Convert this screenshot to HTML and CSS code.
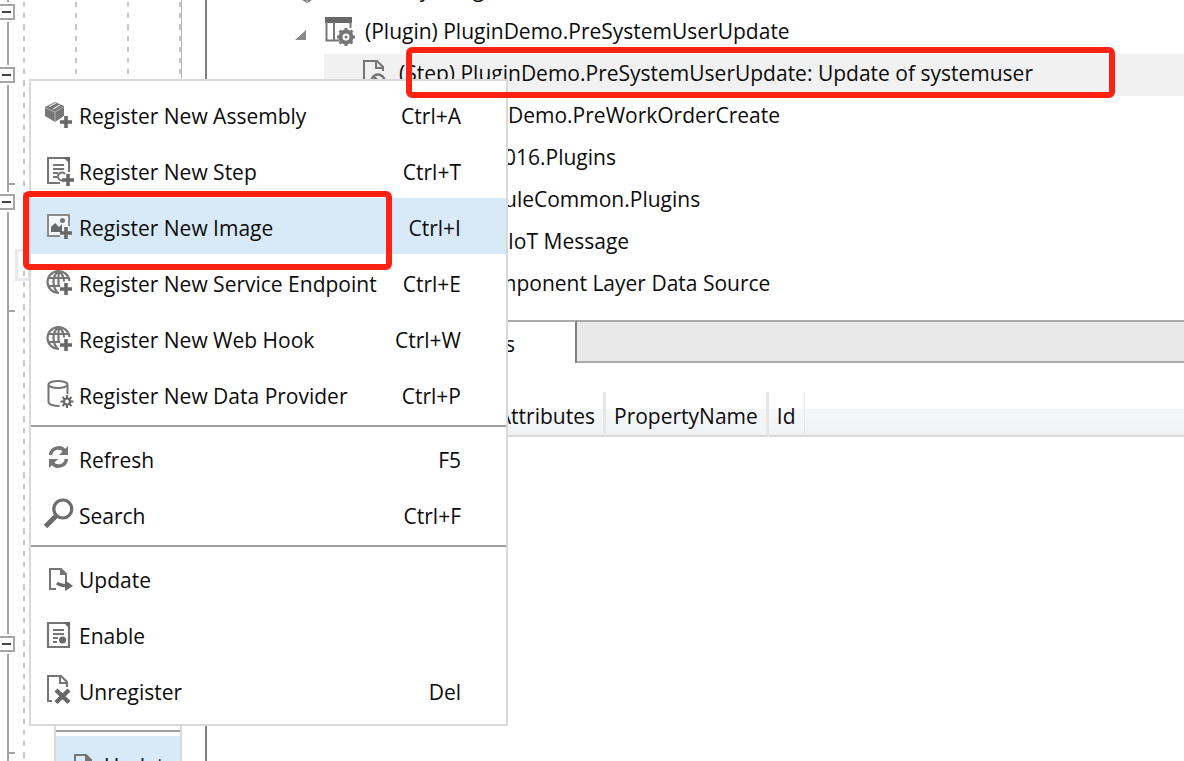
FILE: index.html
```html
<!DOCTYPE html>
<html lang="en">
<head>
<meta charset="utf-8">
<title>Plugin Registration</title>
<link rel="stylesheet" href="styles.css">
</head>
<body>
<svg class="defs" aria-hidden="true">
  <symbol id="globe" viewBox="0 0 30 30">
    <g fill="none" stroke="#757575" stroke-width="2.200">
      <path d="M25.500 12a11 11 0 1 0-10.500 12M14 2.500c-6 5-6 16 0 21.500M15 2.500c4 3 5 6 5 10M4 9h21M4 17h12M14.500 2v15" />
    </g>
    <path d="M22 14v12M16 20h12" stroke="#686868" stroke-width="3.600"/>
  </symbol>
  <symbol id="export" viewBox="0 0 30 30">
    <path d="M12 24H6V4h11l5 5v7" fill="none" stroke="#757575" stroke-width="2"/>
    <path d="M16 3l7 7h-7z" fill="#757575"/>
    <path d="M13 18c3 2.500 5 2.500 9 2.500" fill="none" stroke="#686868" stroke-width="3"/>
    <path d="M21 15l8 6-8 5z" fill="#686868"/>
  </symbol>
</svg>

<main class="app">
  <div class="folds">
    <span class="line top"></span>
    <button class="fold" aria-label="Collapse"></button>
    <span class="line short"></span>
    <button class="fold" aria-label="Collapse"></button>
    <span class="line mid tick"></span><span class="line stub"></span>
    <button class="fold" aria-label="Collapse"></button>
    <span class="line mid tick"></span><span class="line long"></span>
    <button class="fold" aria-label="Collapse"></button>
    <span class="line mid tick"></span><span class="line rest"></span>
  </div>
  <div class="code"><i class="guide"></i><i class="guide"></i><i class="guide"></i><i class="guide last"></i></div>

  <section class="panel">
    <ul class="tree">
      <li class="row assembly">
        <svg class="icon" viewBox="0 0 30 30"><path d="M8 14l8-4 8 4v10l-8 5-8-5z" fill="#777"/><path d="M9 15l7 4 7-4M16 19v9" stroke="#ddd" fill="none"/></svg>
        <span>(Assembly) PluginDemo</span>
      </li>
      <li class="row plugin">
        <svg class="arrow" viewBox="0 0 12 12"><path d="M11 1v10H0z" fill="#8a8a8a"/></svg>
        <svg class="icon" viewBox="0 0 30 30">
          <path d="M0 1h27v6H0z" fill="#686868"/>
          <path d="M1.500 6v18.500H9V6M14 24.500H9M25.500 6v6" fill="none" stroke="#777" stroke-width="2"/>
          <circle cx="21" cy="21" r="5.500" fill="#fff" stroke="#757575" stroke-width="4"/>
          <path d="M21 12v3M21 27v3M12 21h3M27 21h3M14.600 14.600l2.200 2.200M25.200 25.200l2.200 2.200M14.600 27.400l2.200-2.200M25.200 16.800l2.200-2.200" stroke="#757575" stroke-width="3"/>
          <circle cx="21" cy="21" r="1.500" fill="#757575"/>
        </svg>
        <span>(Plugin) PluginDemo.PreSystemUserUpdate</span>
      </li>
      <li class="row step">
        <svg class="icon" viewBox="0 0 30 30">
          <path d="M5 27V3h13l6 6v4M17 3v7h7" fill="none" stroke="#757575" stroke-width="2"/>
          <circle cx="19" cy="23" r="6.500" fill="none" stroke="#757575" stroke-width="2.500"/>
          <path d="M15 19l8 8" stroke="#757575" stroke-width="2.500"/>
        </svg>
        <span>(Step) PluginDemo.PreSystemUserUpdate: Update of systemuser</span>
      </li>
      <li class="row covered">Demo.PreWorkOrderCreate</li>
      <li class="row covered cut">016.Plugins</li>
      <li class="row covered cut">uleCommon.Plugins</li>
      <li class="row covered">IoT Message</li>
      <li class="row covered wide">mponent Layer Data Source</li>
    </ul>
    <div class="tabs" role="tablist"><button class="tab" role="tab" aria-selected="true">s</button><span class="strip"></span></div>
    <table class="grid">
      <thead><tr><th class="attributes">Attributes</th><th class="property">PropertyName</th><th class="id">Id</th><th class="fill"></th></tr></thead>
    </table>
  </section>
</main>

<span class="token"></span>

<div class="menu back">
  <hr>
  <button class="item active"><svg class="icon"><use href="#export"/></svg><span>Update</span></button>
</div>

<div class="menu front" role="menu">
  <button class="item" role="menuitem">
    <svg class="icon" viewBox="0 0 30 30">
      <path d="M1 6l10-5 9 4v10l-9 6-10-6z" fill="#777"/>
      <path d="M1.500 7l9.500 4 8.500-5M11 11v9.500" fill="none" stroke="#b5b5b5" stroke-width="1"/>
      <path d="M5 5.500l7-3.500M9 8l7-4" stroke="#e0e0e0" stroke-width="1.300"/>
      <path d="M22 15v12M16 21h12" stroke="#fff" stroke-width="5.500"/><path d="M22 15v12M16 21h12" stroke="#686868" stroke-width="3.600"/>
    </svg><span>Register New Assembly</span><kbd>Ctrl+A</kbd></button>
  <button class="item" role="menuitem">
    <svg class="icon" viewBox="0 0 30 30">
      <path d="M16 26H4V1h21v14" fill="none" stroke="#757575" stroke-width="2"/><path d="M19 0h7v7z" fill="#686868"/>
      <path d="M9 8h11M9 12h11M9 16h5M9 20h4" stroke="#757575" stroke-width="1.800"/>
      <path d="M21 17a4 4 0 1 0-1 6" fill="none" stroke="#757575" stroke-width="2"/>
      <path d="M24 17v12M18 23h12" stroke="#686868" stroke-width="3.600"/>
    </svg><span>Register New Step</span><kbd>Ctrl+T</kbd></button>
  <button class="item active" role="menuitem">
    <svg class="icon" viewBox="0 0 30 30">
      <path d="M4 2h21v21H4z" fill="#f3f7fa"/>
      <path d="M16 23H4V2h21v11" fill="none" stroke="#8a8a8a" stroke-width="2"/>
      <path d="M7 19v-5l4-4 4 4 3-3v8z" fill="#686868"/><circle cx="18.500" cy="7.500" r="2.500" fill="#757575"/>
      <path d="M22 14v12M16 20h12" stroke="#686868" stroke-width="3.600"/>
    </svg><span>Register New Image</span><kbd>Ctrl+I</kbd></button>
  <button class="item" role="menuitem"><svg class="icon"><use href="#globe"/></svg><span>Register New Service Endpoint</span><kbd>Ctrl+E</kbd></button>
  <button class="item" role="menuitem"><svg class="icon"><use href="#globe"/></svg><span>Register New Web Hook</span><kbd>Ctrl+W</kbd></button>
  <button class="item" role="menuitem">
    <svg class="icon" viewBox="0 0 30 30">
      <ellipse cx="14" cy="3.500" rx="9.500" ry="3.500" fill="none" stroke="#757575" stroke-width="2"/>
      <path d="M4.500 4v17c0 2 4 4 11 4M23.500 4v9" fill="none" stroke="#757575" stroke-width="2"/>
      <circle cx="23" cy="20.500" r="3" fill="#fff" stroke="#686868" stroke-width="2.200"/>
      <path d="M23 14v3.500M23 23.500v3.500M16.500 20.500h3.500M26 20.500h3.500M18.500 16l2.400 2.400M25.100 22.600l2.400 2.400M18.500 25l2.400-2.400M25.100 18.400l2.400-2.400" stroke="#686868" stroke-width="2"/>
    </svg><span>Register New Data Provider</span><kbd>Ctrl+P</kbd></button>
  <hr>
  <button class="item" role="menuitem">
    <svg class="icon" viewBox="0 0 30 30">
      <path d="M6.500 10c1-8 11-9 14-4M22.500 14c-1 8-11 9-14 4" fill="none" stroke="#757575" stroke-width="3.500"/>
      <path d="M24 1v9h-9zM5 23v-9h9z" fill="#757575"/>
    </svg><span>Refresh</span><kbd>F5</kbd></button>
  <button class="item" role="menuitem">
    <svg class="icon" viewBox="0 0 30 30">
      <circle cx="18.800" cy="8" r="9" fill="none" stroke="#6c6c6c" stroke-width="3.200"/>
      <path d="M12 15L1.500 25.500" stroke="#6c6c6c" stroke-width="5"/>
    </svg><span>Search</span><kbd>Ctrl+F</kbd></button>
  <hr>
  <button class="item" role="menuitem"><svg class="icon"><use href="#export"/></svg><span>Update</span></button>
  <button class="item" role="menuitem">
    <svg class="icon" viewBox="0 0 30 30">
      <path d="M4 2h21v24H4z" fill="none" stroke="#757575" stroke-width="2.200"/><path d="M19 1h7v7z" fill="#686868"/>
      <path d="M9 9h11M9 13h11M9 17h5M9 21h4" stroke="#757575" stroke-width="1.800"/><circle cx="18.500" cy="19" r="3.500" fill="#686868"/>
    </svg><span>Enable</span></button>
  <button class="item" role="menuitem">
    <svg class="icon" viewBox="0 0 30 30">
      <path d="M8 24H4V-1h13l6 6v5M16-1v7h7" fill="none" stroke="#757575" stroke-width="2"/>
      <path d="M12 13l13 12.500M25 13L12 25.500" stroke="#686868" stroke-width="4.500"/>
    </svg><span>Unregister</span><kbd>Del</kbd></button>
</div>

<div class="mark step-mark"></div>
<div class="mark image-mark"></div>
</body>
</html>
```
FILE: styles.css
```css
* { box-sizing: border-box; }
body {
  margin: 0;
  height: 100vh;
  position: relative;
  overflow: hidden;
  background: #fff;
  color: #0c0c0c;
  font: 21px/28px "Open Sans", "Noto Sans", sans-serif;
}
button { font: inherit; color: inherit; border: 0; padding: 0; background: none; text-align: left; }
.defs { display: none; }
.app { display: flex; height: 100%; }

/* Editor gutter */
.folds { width: 15px; flex: none; display: flex; flex-direction: column; overflow: hidden; }
.fold {
  flex: none;
  width: 17px;
  height: 16px;
  margin: 2px 0 2px -2px;
  border: 2px solid #a5a5a5;
  background: linear-gradient(#444, #444) 2px 5px / 9px 2px no-repeat;
}
.line { flex: none; margin-left: 7px; width: 8px; border-left: 2px solid #a5a5a5; }
.tick { border-bottom: 2px solid #a5a5a5; }
.top { height: 2px; }
.short { height: 43px; }
.mid { height: 100px; }
.stub { height: 7px; }
.long { height: 322px; }
.rest { flex: 1; }
.code { width: 192px; flex: none; display: flex; padding-left: 8px; border-right: 2px solid #808080; }
.guide {
  width: 52px;
  flex: none;
  background: repeating-linear-gradient(#c6c6c6 0 5px, #fff 5px 11px, #c6c6c6 11px 16px, #fff 16px 22px, #c6c6c6 22px 28px, #fff 28px 34px, #c6c6c6 34px 39px, #fff 39px 45px, #c6c6c6 45px 50px, #fff 50px 56px) 0 2px / 2px 56px repeat-y;
}
.last { width: 3px; border-right: 1px solid #b8b8b8; }
.token { position: absolute; left: 15px; top: 249px; width: 16px; height: 32px; border: 3px solid #e8e8f3; }

/* Registration tree */
.panel { flex: 1; min-width: 0; display: flex; flex-direction: column; }
.tree { list-style: none; margin: -30px 0 0; padding: 0 0 14px; }
.row { display: flex; align-items: center; gap: 10px; height: 42px; padding-bottom: 4px; white-space: nowrap; }
.icon { width: 30px; height: 30px; flex: none; overflow: visible; }
.arrow { width: 12px; height: 12px; margin: 8px 8px 0 0; }
.assembly { padding-left: 84px; }
.plugin { padding-left: 88px; }
.step { margin-left: 117px; padding-left: 35px; background: #f1f1f1; }
.covered { padding-left: 301px; }
.cut { padding-left: 297px; }
.wide { padding-left: 290px; }

.tabs { display: flex; height: 43px; }
.tab { width: 370px; padding: 2px 0 0 298px; border-top: 2px solid #aaa; border-right: 2px solid #808080; }
.strip { flex: 1; background: #e9e9e9; border: solid #aaa; border-width: 2px 0; }
.grid { width: 100%; margin-top: 29px; border-collapse: separate; border-spacing: 0; }
.grid th {
  height: 45px;
  padding: 4px 8px 0;
  text-align: left;
  font-weight: 400;
  border-right: 3px solid #e6e6e6;
  border-bottom: 2px solid #d9d9d9;
  background: linear-gradient(#fff 40%, #f6f7f9 40%, #f1f2f4);
}
.grid .attributes { width: 399px; text-align: right; }
.grid .property { width: 162px; }
.grid .id { width: 36px; border-right-width: 1px; }
.grid .fill { border-right: 0; }

/* Context menus */
.menu { position: absolute; background: #fff; border: 2px solid #d9d9d9; display: flex; flex-direction: column; }
.front { left: 29px; top: 79px; width: 479px; padding: 5px 0 6px; }
.back { left: 54px; top: 720px; width: 128px; overflow: hidden; padding-top: 5px; }
.menu hr { width: 100%; height: 2px; margin: 3px 0; border: 0; background: #a0a0a0; }
.back hr { margin-bottom: 4px; }
.item { display: flex; align-items: center; gap: 5px; height: 56px; padding: 4px 45px 0 13px; flex: none; white-space: nowrap; }
.item kbd { font: inherit; margin-left: auto; }
.active { background: #d8eaf7; }

/* Highlight frames */
.mark { position: absolute; border: 6px solid #ff2112; border-radius: 6px; }
.step-mark { left: 406px; top: 47px; width: 709px; height: 51px; }
.image-mark { left: 23px; top: 191px; width: 369px; height: 79px; }
```
